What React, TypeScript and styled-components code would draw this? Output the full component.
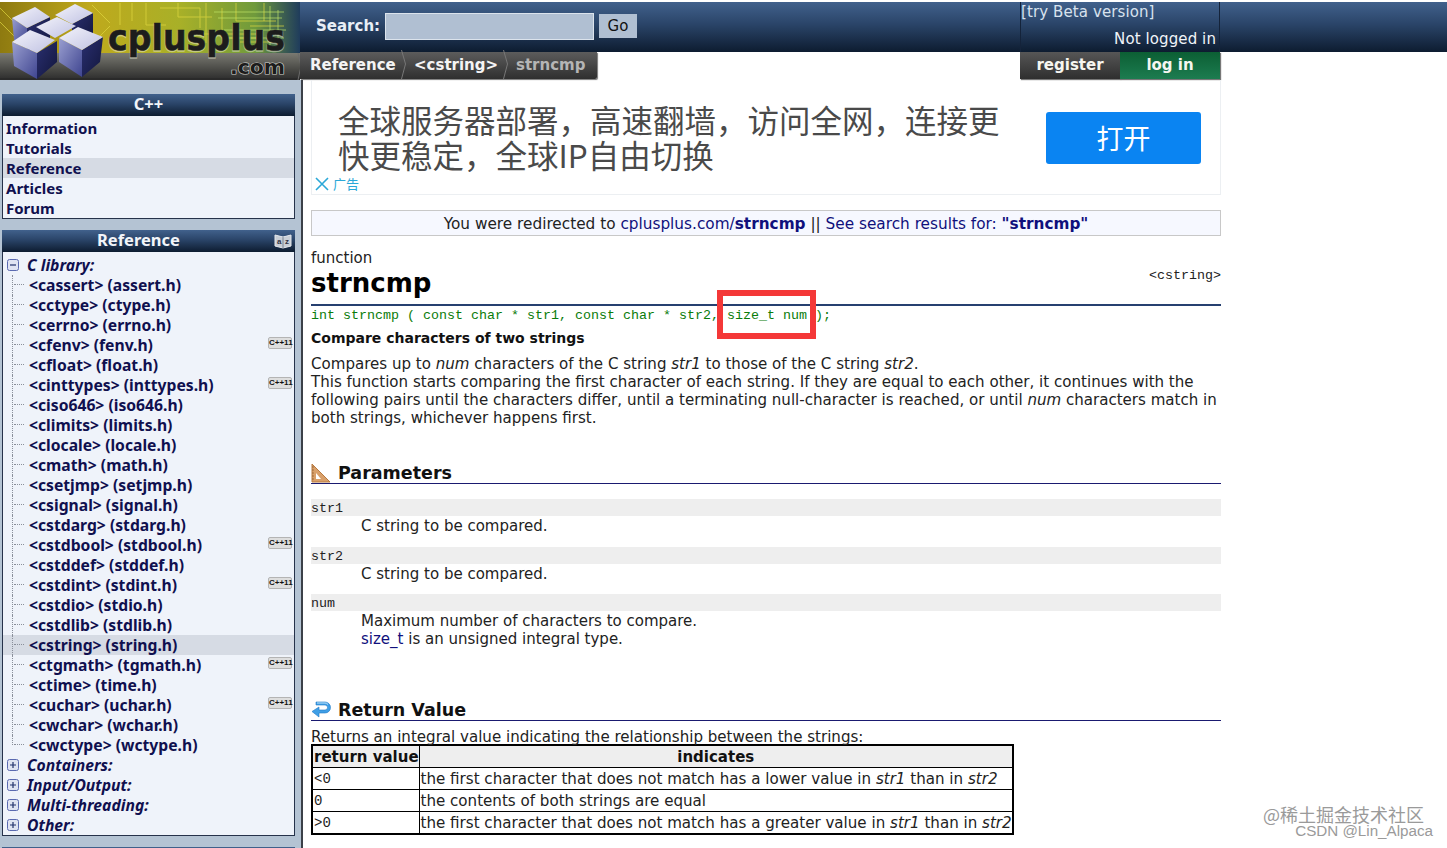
import React from "react";
import styled, { createGlobalStyle } from "styled-components";

const Global = createGlobalStyle`
  html, body { margin: 0; padding: 0; background: #fff; }
  body { font-family: "DejaVu Sans", Verdana, sans-serif; color: #111; overflow: hidden; }
  a { text-decoration: none; color: inherit; }
`;

const navy = "linear-gradient(#41618c 0%, #2a4468 45%, #0d1c30 100%)";

const Page = styled.div`
  width: 1447px;
  height: 848px;
  overflow: hidden;
  position: relative;
  background: #fff;
`;
const Header = styled.header`
  display: flex;
  height: 80px;
`;
const LogoBox = styled.div`
  width: 300px;
  height: 80px;
  flex: none;
`;
const HeaderMain = styled.div`
  flex: 1;
  display: flex;
  flex-direction: column;
`;
const SearchRow = styled.div`
  height: 50px;
  margin-top: 2px;
  background: ${navy};
  display: flex;
`;
const SearchForm = styled.div`
  width: 720px;
  flex: none;
  box-sizing: border-box;
  padding: 11px 0 0 16px;
  display: flex;
  align-items: flex-start;
`;
const SearchLabel = styled.label`
  font: bold 15px "DejaVu Sans", sans-serif;
  color: #e8eef6;
  margin-top: 4px;
  width: 69px;
  white-space: nowrap;
`;
const SearchInput = styled.div`
  width: 207px;
  height: 25px;
  background: #b0bfd2;
  border: 1px solid #dbe3ec;
`;
const GoButton = styled.div`
  margin: 1px 0 0 5px;
  width: 38px;
  height: 24px;
  background: #b0bfd2;
  color: #111;
  font: 15px "DejaVu Sans", sans-serif;
  display: flex;
  align-items: center;
  justify-content: center;
`;
const UserBox = styled.div`
  width: 200px;
  box-sizing: border-box;
  flex: none;
  border-left: 1px solid #14233a;
  border-right: 1px solid #14233a;
  color: #f0f4f8;
  font: 15px "DejaVu Sans", sans-serif;
  letter-spacing: 0.1px;
`;
const BetaLink = styled.div`
  height: 27px;
  margin-top: 1px;
  line-height: 19px;
  color: #d8e2ee;
`;
const LoginState = styled.div`
  text-align: right;
  padding-right: 3px;
  line-height: 19px;
`;
const NavRow = styled.div`
  height: 28px;
  display: flex;
  justify-content: flex-start;
`;
const Crumbs = styled.nav`
  width: 297px;
  height: 27px;
  box-sizing: border-box;
  padding-bottom: 2px;
  flex: none;
  display: flex;
  align-items: center;
  background: linear-gradient(#5c5c5c, #2f2f2f);
  border-radius: 0 0 2px 0;
  box-shadow: 1px 1px 1px #777;
  font: bold 15px "DejaVu Sans", sans-serif;
`;
const Crumb = styled.span<{ $w: number; $dim?: boolean }>`
  position: relative;
  width: ${(p) => p.$w}px;
  box-sizing: border-box;
  padding-left: 10px;
  color: ${(p) => (p.$dim ? "#b5b5b5" : "#f4f4f4")};
  white-space: nowrap;
`;
const ChevronSlot = styled.span`
  position: absolute;
  right: -3px;
  top: -6px;
  width: 6px;
  height: 29px;
`;
const NavGap = styled.div`
  width: 423px;
  flex: none;
`;
const UserButton = styled.div<{ $green?: boolean; $w: number }>`
  width: ${(p) => p.$w}px;
  height: 27px;
  box-sizing: border-box;
  padding-bottom: 2px;
  display: flex;
  align-items: center;
  justify-content: center;
  color: #f6f6f0;
  font: bold 15px "DejaVu Sans", sans-serif;
  background: ${(p) =>
    p.$green ? "linear-gradient(#0c5f34, #1c7c50)" : "linear-gradient(#565656, #2f2f2f)"};
  box-shadow: 1px 1px 1px #777;
`;

const Body = styled.div`
  display: flex;
  height: 768px;
`;
const Sidebar = styled.aside`
  width: 303px;
  flex: none;
  box-sizing: border-box;
  padding: 14px 0 0 2px;
  background: #b4c3d3;
  border-right: 2px solid #3b4048;
  margin-right: 8px;
`;
const Panel = styled.section`
  width: 293px;
  margin-bottom: 11px;
`;
const PanelHead = styled.h2<{ $shift?: number }>`
  position: relative;
  margin: 0;
  height: 22px;
  box-sizing: border-box;
  padding-right: ${(p) => p.$shift ?? 0}px;
  background: ${navy};
  color: #f2f5f9;
  font: bold 16.5px/20px "Noto Sans", sans-serif;
  text-align: center;
`;
const PanelBody = styled.div<{ $top: number }>`
  background: #eff3fa;
  padding: ${(p) => p.$top}px 0 0;
  border: 1px solid #26324a;
  border-top: none;
  box-sizing: border-box;
`;
const MenuItem = styled.a<{ $on?: boolean }>`
  display: block;
  height: 20px;
  padding-left: 3px;
  font: bold 15px/20px "Noto Sans", sans-serif;
  color: #10104f;
  background: ${(p) => (p.$on ? "#d6dbe4" : "transparent")};
`;
const SectionRow = styled.div`
  display: flex;
  align-items: center;
  height: 20px;
  padding-left: 4px;
  gap: 7px;
  font: italic bold 15.7px/20px "Noto Sans", sans-serif;
  color: #10104f;
`;
const TreeRow = styled.a<{ $on?: boolean; $last?: boolean }>`
  position: relative;
  display: flex;
  justify-content: space-between;
  align-items: center;
  height: 20px;
  padding: 0 2px 0 26px;
  font: bold 15.7px/20px "Noto Sans", sans-serif;
  color: #10104f;
  white-space: nowrap;
  background: ${(p) => (p.$on ? "#d6dbe4" : "transparent")};
  &::before {
    content: "";
    position: absolute;
    left: 9px;
    top: 0;
    height: ${(p) => (p.$last ? "10px" : "20px")};
    border-left: 1px dotted #8a8f9a;
  }
  &::after {
    content: "";
    position: absolute;
    left: 11px;
    top: 9px;
    width: 10px;
    border-top: 1px dotted #8a8f9a;
  }
`;
const Badge = styled.span`
  width: 22px;
  height: 10px;
  margin-top: -5px;
  border-radius: 2px;
  background: #dedede;
  border: 1px solid #b4b4b4;
  color: #111;
  font: bold 8px/10px "Liberation Sans", sans-serif;
  text-align: center;
`;
const AzIcon = styled.span`
  position: absolute;
  right: 3px;
  top: 2px;
  width: 18px;
  height: 18px;
`;

const Main = styled.main`
  width: 910px;
  flex: none;
  position: relative;
`;
const Ad = styled.div`
  height: 115px;
  box-sizing: border-box;
  position: relative;
  border: 1px solid #eceff2;
  border-top: none;
  padding: 22px 0 0 26px;
  display: flex;
  margin-bottom: 15px;
`;
const AdText = styled.div`
  width: 708px;
  flex: none;
  box-sizing: border-box;
  padding-right: 30px;
  font: 31.5px/35px "Noto Sans CJK SC", sans-serif;
  color: #4a4a4a;
`;
const AdButton = styled.div`
  width: 155px;
  height: 52px;
  margin-top: 10px;
  border-radius: 3px;
  background: #0a84f2;
  color: #fff;
  font: 27px/52px "Noto Sans CJK SC", sans-serif;
  text-align: center;
`;
const AdMark = styled.div`
  position: absolute;
  left: 3px;
  bottom: 2px;
  display: flex;
  align-items: center;
  gap: 4px;
  color: #2ba8d8;
  font: 13px/16px "Noto Sans CJK SC", sans-serif;
`;
const Redirect = styled.div`
  height: 26px;
  box-sizing: border-box;
  border: 1px solid #c8c8c8;
  background: #f6f8ff;
  text-align: center;
  font: 15.3px/26px "DejaVu Sans", sans-serif;
  color: #222;
  margin-bottom: 12px;
`;
const LinkText = styled.a`
  color: #10107c;
`;
const TitleBlock = styled.div`
  position: relative;
  height: 56px;
  border-bottom: 2px solid #264070;
`;
const Kind = styled.div`
  font: 15px/20px "DejaVu Sans", sans-serif;
  color: #222;
`;
const Title = styled.h1`
  margin: 0;
  font: bold 26px/30px "DejaVu Sans", sans-serif;
  color: #000;
`;
const HeaderFile = styled.div`
  position: absolute;
  right: 0;
  top: 20px;
  font: 13.33px/16px "Liberation Mono", monospace;
  color: #222;
`;
const Proto = styled.div`
  font: 13.33px/18px "Liberation Mono", monospace;
  color: #0a7c0a;
  white-space: pre;
  height: 18px;
  margin-top: 1px;
`;
const Marker = styled.div`
  position: absolute;
  left: 406px;
  top: 210px;
  width: 99px;
  height: 49px;
  box-sizing: border-box;
  border: 6px solid #f43838;
`;
const Subtitle = styled.h2`
  margin: 4px 0 8px;
  font: bold 14px/18px "DejaVu Sans", sans-serif;
  color: #111;
`;
const Para = styled.p`
  margin: 0;
  font: 15.07px/18px "DejaVu Sans", sans-serif;
  color: #222;
  width: 907px;
`;
const Lead = styled.p`
  margin: 8px 0 0;
  height: 15px;
  font: 15.07px/16px "DejaVu Sans", sans-serif;
  color: #222;
  white-space: nowrap;
`;
const SectionTitle = styled.h3<{ $top: number }>`
  display: flex;
  align-items: center;
  margin: ${(p) => p.$top}px 0 0;
  height: 21px;
  border-bottom: 1px solid #1a1a70;
  font: bold 17.5px/22px "DejaVu Sans", sans-serif;
  color: #111;
`;
const SectionIcon = styled.span`
  width: 27px;
  height: 20px;
  flex: none;
`;
const Param = styled.div<{ $gap: number }>`
  margin-top: ${(p) => p.$gap}px;
`;
const ParamName = styled.div`
  height: 17px;
  background: #eeeeee;
  font: 13.33px/19px "Liberation Mono", monospace;
  color: #222;
`;
const ParamDesc = styled.div`
  padding-left: 50px;
  padding-top: 1px;
  font: 15px/18px "DejaVu Sans", sans-serif;
  color: #222;
`;
const Table = styled.table`
  border-collapse: collapse;
  width: 703px;
  border: 2px solid #000;
  font: 15.1px/19px "DejaVu Sans", sans-serif;
  color: #222;
  table-layout: fixed;
`;
const Th = styled.th`
  border: 1px solid #000;
  background: #eeeeee;
  color: #111;
  padding: 1px 1px 0;
  height: 20px;
  font: bold 15px/19px "DejaVu Sans", sans-serif;
  white-space: nowrap;
`;
const Td = styled.td<{ $mono?: boolean }>`
  border: 1px solid #000;
  padding: 1px 1px 0;
  height: 20px;
  white-space: nowrap;
  ${(p) => (p.$mono ? `font: 14px/19px "Liberation Mono", monospace;` : "")}
`;
const Watermark = styled.div`
  position: absolute;
  right: 14px;
  bottom: 10px;
  text-align: right;
  color: #9a9a9a;
`;
const WmTop = styled.div`
  font: 18px/19px "Noto Sans CJK SC", sans-serif;
  margin-right: 9px;
`;
const WmBottom = styled.div`
  font: 15.2px/14px "Liberation Sans", sans-serif;
`;

const Logo = () => (
  <svg width="300" height="80" viewBox="0 0 300 80">
    <defs>
      <linearGradient id="bg" x1="0" x2="1" y1="0" y2="0">
        <stop offset="0" stopColor="#8e7a10" />
        <stop offset="0.3" stopColor="#bfa91c" />
        <stop offset="0.6" stopColor="#a8b028" />
        <stop offset="0.85" stopColor="#6f9a3c" />
        <stop offset="1" stopColor="#1f3c5c" />
      </linearGradient>
      <linearGradient id="bar" x1="0" x2="0" y1="0" y2="1">
        <stop offset="0" stopColor="#7a7a72" />
        <stop offset="0.6" stopColor="#4a4a46" />
        <stop offset="1" stopColor="#2c2c2c" />
      </linearGradient>
      <linearGradient id="side" x1="0" x2="1" y1="0" y2="1">
        <stop offset="0" stopColor="#9a9fd0" />
        <stop offset="1" stopColor="#3f4590" />
      </linearGradient>
      <linearGradient id="dark" x1="0" x2="1" y1="0" y2="1">
        <stop offset="0" stopColor="#2a2f70" />
        <stop offset="1" stopColor="#12163c" />
      </linearGradient>
      <linearGradient id="top" x1="0" x2="1" y1="0" y2="1">
        <stop offset="0" stopColor="#f4f4fb" />
        <stop offset="1" stopColor="#bfc1e2" />
      </linearGradient>
    </defs>
    <rect y="2" width="300" height="51" fill="url(#bg)" />
    <g stroke="#e0d840" strokeWidth="1" opacity="0.7" fill="none">
      <path d="M120 3v22M132 3v18M146 3v22h20M160 8h40v20M178 3v14h34M196 34h60M206 3v40M222 8v30h40M236 3v18h40M250 26h34M264 3v18M240 42h40" />
      <path d="M0 8l30 30M0 22l14 14M92 5l18 18M96 40l14-14" />
    </g>
    <g stroke="#c4ea68" strokeWidth="1" opacity="0.65" fill="none">
      <path d="M214 12h70M218 18h64M224 30h62M228 38h56M270 6v40M278 10v34" />
    </g>
    <rect y="53" width="300" height="27" fill="url(#bar)" />
    <rect y="78" width="300" height="2" fill="#2a2a2a" />
    <polygon points="50,17 27,28 27,52 50,40" fill="url(#dark)" />
    <polygon points="12,18 27,28 27,44 14,40" fill="url(#side)" />
    <polygon points="12,18 35,7 50,17 27,28" fill="url(#top)" />
    <polygon points="93,13 72,24 72,44 93,34" fill="url(#dark)" />
    <polygon points="55,15 75,4 93,13 72,24" fill="url(#top)" />
    <polygon points="57,17 76,26 55,38 36,27" fill="url(#top)" />
    <polygon points="12,42 37,53 37,79 14,66" fill="url(#side)" />
    <polygon points="37,53 57,41 57,62 37,79" fill="url(#dark)" />
    <polygon points="12,42 30,30 55,40 37,53" fill="url(#top)" />
    <polygon points="59,38 82,50 82,77 59,62" fill="url(#side)" />
    <polygon points="82,50 103,37 100,62 82,77" fill="url(#dark)" />
    <polygon points="59,38 78,27 103,37 82,50" fill="url(#top)" />
    <text x="108" y="51" textLength="177" lengthAdjust="spacingAndGlyphs" fontFamily="DejaVu Sans" fontWeight="bold" fontSize="35" fill="#e8e8d0" stroke="#e8e8d0" strokeWidth="1.5" opacity="0.5">cplusplus</text>
    <text x="108" y="50" textLength="177" lengthAdjust="spacingAndGlyphs" fontFamily="DejaVu Sans" fontWeight="bold" fontSize="35" fill="#1c1c1c" stroke="#1c1c1c" strokeWidth="0.6">cplusplus</text>
    <text x="230" y="74" textLength="55" lengthAdjust="spacingAndGlyphs" fontFamily="DejaVu Sans" fontWeight="bold" fontSize="19" fill="#cfcfc8" stroke="#cfcfc8" strokeWidth="1.2">.com</text>
    <text x="230" y="74" textLength="55" lengthAdjust="spacingAndGlyphs" fontFamily="DejaVu Sans" fontWeight="bold" fontSize="19" fill="#1c1c1c">.com</text>
    <path d="M298 53l3 13-3 14" stroke="#6b6b6b" fill="none" />
  </svg>
);

const Chevron = () => (
  <ChevronSlot>
    <svg width="6" height="29" viewBox="0 0 6 29">
      <path d="M0.500 0l4 14-4 15" stroke="#777" fill="none" />
    </svg>
  </ChevronSlot>
);

const Toggle = ({ open }: { open?: boolean }) => (
  <svg width="13" height="13" viewBox="0 0 13 13" style={{ flex: "none" }}>
    <rect x="0.5" y="0.5" width="11" height="11" rx="2" fill="#dfe3f2" stroke="#5a6ab0" />
    <path d={open ? "M3 6h6" : "M3 6h6M6 3v6"} stroke="#20306a" strokeWidth="1.2" />
  </svg>
);

const Az = () => (
  <AzIcon>
    <svg width="18" height="18" viewBox="0 0 18 18">
      <path d="M1 3l8 2 8-2v11l-8 2-8-2z" fill="#c8ced6" stroke="#e6e9ee" />
      <path d="M9 5v11" stroke="#7a8492" />
      <text x="3" y="12" fontSize="8" fontFamily="Liberation Sans" fill="#334">a</text>
      <text x="11" y="12" fontSize="8" fontFamily="Liberation Sans" fill="#334">z</text>
    </svg>
  </AzIcon>
);

const Ruler = () => (
  <SectionIcon>
    <svg width="20" height="20" viewBox="0 0 20 20">
      <path d="M1 1l18 18H1z" fill="#d9a06a" stroke="#b87a40" />
      <path d="M5 10l5 6H5z" fill="#fff" />
      <path d="M1 4h2M1 7h2M1 10h2M1 13h2M1 16h2" stroke="#8a5a28" strokeWidth="0.7" />
    </svg>
  </SectionIcon>
);

const ReturnArrow = () => (
  <SectionIcon>
    <svg width="20" height="20" viewBox="0 0 20 20">
      <path d="M5 2h9a5 5 0 0 1 0 11H8v4L1 11.5 8 7v3h6a2 2 0 0 0 0-5H5z" fill="#3f9fe6" stroke="#1f78c8" strokeWidth="0.6" />
      <path d="M6 3h8a4 4 0 0 1 3 1.500" stroke="#bfe2fa" fill="none" />
    </svg>
  </SectionIcon>
);

const CloseMark = () => (
  <svg width="14" height="14" viewBox="0 0 14 14">
    <path d="M1 1l12 12M13 1L1 13" stroke="#2ba8d8" strokeWidth="1.6" />
  </svg>
);

const menu = ["Information", "Tutorials", "Reference", "Articles", "Forum"];
const libs: [string, boolean?][] = [
  ["<cassert> (assert.h)"],
  ["<cctype> (ctype.h)"],
  ["<cerrno> (errno.h)"],
  ["<cfenv> (fenv.h)", true],
  ["<cfloat> (float.h)"],
  ["<cinttypes> (inttypes.h)", true],
  ["<ciso646> (iso646.h)"],
  ["<climits> (limits.h)"],
  ["<clocale> (locale.h)"],
  ["<cmath> (math.h)"],
  ["<csetjmp> (setjmp.h)"],
  ["<csignal> (signal.h)"],
  ["<cstdarg> (stdarg.h)"],
  ["<cstdbool> (stdbool.h)", true],
  ["<cstddef> (stddef.h)"],
  ["<cstdint> (stdint.h)", true],
  ["<cstdio> (stdio.h)"],
  ["<cstdlib> (stdlib.h)"],
  ["<cstring> (string.h)"],
  ["<ctgmath> (tgmath.h)", true],
  ["<ctime> (time.h)"],
  ["<cuchar> (uchar.h)", true],
  ["<cwchar> (wchar.h)"],
  ["<cwctype> (wctype.h)"],
];
const groups = ["Containers:", "Input/Output:", "Multi-threading:", "Other:"];

export default function App() {
  return (
    <Page>
      <Global />
      <Header>
        <LogoBox>
          <Logo />
        </LogoBox>
        <HeaderMain>
          <SearchRow>
            <SearchForm>
              <SearchLabel>Search:</SearchLabel>
              <SearchInput />
              <GoButton>Go</GoButton>
            </SearchForm>
            <UserBox>
              <BetaLink>[try Beta version]</BetaLink>
              <LoginState>Not logged in</LoginState>
            </UserBox>
          </SearchRow>
          <NavRow>
            <Crumbs>
              <Crumb $w={104}>
                Reference
                <Chevron />
              </Crumb>
              <Crumb $w={102}>
                &lt;cstring&gt;
                <Chevron />
              </Crumb>
              <Crumb $w={91} $dim>
                strncmp
              </Crumb>
            </Crumbs>
            <NavGap />
            <UserButton $w={100}>register</UserButton>
            <UserButton $w={100} $green>
              log in
            </UserButton>
          </NavRow>
        </HeaderMain>
      </Header>
      <Body>
        <Sidebar>
          <Panel>
            <PanelHead>C++</PanelHead>
            <PanelBody $top={2}>
              {menu.map((m) => (
                <MenuItem key={m} $on={m === "Reference"}>
                  {m}
                </MenuItem>
              ))}
            </PanelBody>
          </Panel>
          <Panel>
            <PanelHead $shift={20}>
              Reference
              <Az />
            </PanelHead>
            <PanelBody $top={3}>
              <SectionRow>
                <Toggle open />C library:
              </SectionRow>
              {libs.map(([name, badge], i) => (
                <TreeRow key={name} $on={name.startsWith("<cstring>")} $last={i === libs.length - 1}>
                  {name}
                  {badge && <Badge>C++11</Badge>}
                </TreeRow>
              ))}
              {groups.map((g) => (
                <SectionRow key={g}>
                  <Toggle />
                  {g}
                </SectionRow>
              ))}
            </PanelBody>
          </Panel>
          <Panel>
            <PanelHead />
          </Panel>
        </Sidebar>
        <Main>
          <Ad>
            <AdText>全球服务器部署，高速翻墙，访问全网，连接更快更稳定，全球IP自由切换</AdText>
            <AdButton>打开</AdButton>
            <AdMark>
              <CloseMark />
              广告
            </AdMark>
          </Ad>
          <Redirect>
            You were redirected to <LinkText>cplusplus.com/<b>strncmp</b></LinkText> ||{" "}
            <LinkText>See search results for: <b>"strncmp"</b></LinkText>
          </Redirect>
          <TitleBlock>
            <Kind>function</Kind>
            <Title>strncmp</Title>
            <HeaderFile>&lt;cstring&gt;</HeaderFile>
          </TitleBlock>
          <Proto>int strncmp ( const char * str1, const char * str2, size_t num );</Proto>
          <Marker />
          <Subtitle>Compare characters of two strings</Subtitle>
          <Para>
            Compares up to <i>num</i> characters of the C string <i>str1</i> to those of the C string <i>str2</i>.
            <br />
            This function starts comparing the first character of each string. If they are equal to each other, it
            continues with the following pairs until the characters differ, until a terminating null-character is
            reached, or until <i>num</i> characters match in both strings, whichever happens first.
          </Para>
          <SectionTitle $top={35}>
            <Ruler />
            Parameters
          </SectionTitle>
          <Param $gap={15}>
            <ParamName>str1</ParamName>
            <ParamDesc>C string to be compared.</ParamDesc>
          </Param>
          <Param $gap={12}>
            <ParamName>str2</ParamName>
            <ParamDesc>C string to be compared.</ParamDesc>
          </Param>
          <Param $gap={11}>
            <ParamName>num</ParamName>
            <ParamDesc>
              Maximum number of characters to compare.
              <br />
              <LinkText>size_t</LinkText> is an unsigned integral type.
            </ParamDesc>
          </Param>
          <SectionTitle $top={51}>
            <ReturnArrow />
            Return Value
          </SectionTitle>
          <Lead>Returns an integral value indicating the relationship between the strings:</Lead>
          <Table>
            <colgroup>
              <col style={{ width: 107 }} />
              <col />
            </colgroup>
            <thead>
              <tr>
                <Th>return value</Th>
                <Th>indicates</Th>
              </tr>
            </thead>
            <tbody>
              <tr>
                <Td $mono>&lt;0</Td>
                <Td>
                  the first character that does not match has a lower value in <i>str1</i> than in <i>str2</i>
                </Td>
              </tr>
              <tr>
                <Td $mono>0</Td>
                <Td>the contents of both strings are equal</Td>
              </tr>
              <tr>
                <Td $mono>&gt;0</Td>
                <Td>
                  the first character that does not match has a greater value in <i>str1</i> than in <i>str2</i>
                </Td>
              </tr>
            </tbody>
          </Table>
        </Main>
      </Body>
      <Watermark>
        <WmTop>@稀土掘金技术社区</WmTop>
        <WmBottom>CSDN @Lin_Alpaca</WmBottom>
      </Watermark>
    </Page>
  );
}
